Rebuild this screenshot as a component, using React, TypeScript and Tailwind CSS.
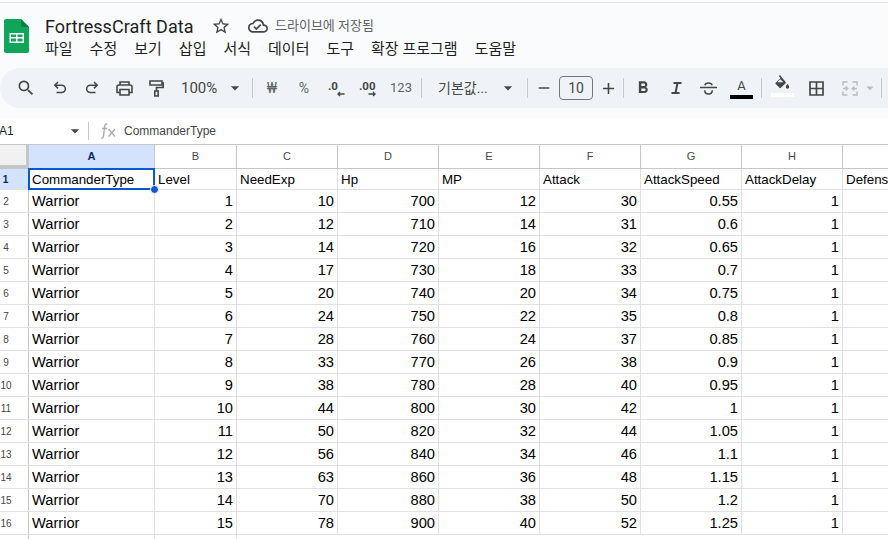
import { MdSearch, MdStarBorder, MdOutlineCloudDone, MdFormatBold, MdArrowDropDown, MdAdd, MdRemove } from "react-icons/md";

const needExp = [10, 12, 14, 17, 20, 24, 28, 33, 38, 44, 50, 56, 63, 70, 78];
const hp = [700, 710, 720, 730, 740, 750, 760, 770, 780, 800, 820, 840, 860, 880, 900];
const mp = [12, 14, 16, 18, 20, 22, 24, 26, 28, 30, 32, 34, 36, 38, 40];
const attack = [30, 31, 32, 33, 34, 35, 37, 38, 40, 42, 44, 46, 48, 50, 52];
const speed = ["0.55", "0.6", "0.65", "0.7", "0.75", "0.8", "0.85", "0.9", "0.95", "1", "1.05", "1.1", "1.15", "1.2", "1.25"];

const columns = [
  { name: "A", width: "w-[126px]", head: "CommanderType" },
  { name: "B", width: "w-[82px]", head: "Level" },
  { name: "C", width: "w-[101px]", head: "NeedExp" },
  { name: "D", width: "w-[101px]", head: "Hp" },
  { name: "E", width: "w-[101px]", head: "MP" },
  { name: "F", width: "w-[101px]", head: "Attack" },
  { name: "G", width: "w-[101px]", head: "AttackSpeed" },
  { name: "H", width: "w-[101px]", head: "AttackDelay" },
  { name: "", width: "w-[101px]", head: "Defense" },
];

const ui = "font-['Roboto',sans-serif]";
const kr = "font-['Roboto','Noto_Sans_CJK_KR',sans-serif]";
const sheet = "font-['Liberation_Sans',Arial,sans-serif]";

function SheetsLogo() {
  return (
    <svg width="25" height="34" viewBox="0 0 25 34">
      <path d="M2 0h15l8 8v24a2 2 0 0 1-2 2H2a2 2 0 0 1-2-2V2a2 2 0 0 1 2-2z" fill="#0fa65a" />
      <path d="M17 0l8 8h-6a2 2 0 0 1-2-2z" fill="#0b8043" />
      <path d="M5.5 14h14.5v10H5.5z M7 15.5v2.6h5v-2.6z M13.5 15.5v2.6h5v-2.6z M7 19.6v2.9h5v-2.9z M13.5 19.6v2.9h5v-2.9z" fill="#fff" fillRule="evenodd" />
    </svg>
  );
}

function Sep() {
  return <div className="w-px h-5 bg-[#c7c9cc] shrink-0" />;
}

function Btn({ w, children }: { w: string; children: React.ReactNode }) {
  return <div className={`${w} h-full flex items-center justify-center shrink-0 text-[#444746]`}>{children}</div>;
}

function Caret() {
  return <MdArrowDropDown size={20} className="text-[#444746]" />;
}

function UndoIcon({ flip = false }: { flip?: boolean }) {
  return (
    <svg width="14" height="14" viewBox="0 0 14 14" fill="none" stroke="#444746" strokeWidth="1.5" className={flip ? "-scale-x-100" : ""}>
      <path d="M5 1L1.8 4.2 5 7.4" />
      <path d="M2 4.2h6.7a3.6 3.6 0 0 1 0 7.3H3.5" />
    </svg>
  );
}

function PrintIcon() {
  return (
    <svg width="17" height="15" viewBox="0 0 17 15" fill="none" stroke="#444746" strokeWidth="1.6">
      <path d="M4 4V1h9v3" />
      <path d="M4 11.5H1V6a2 2 0 0 1 2-2h11a2 2 0 0 1 2 2v5.500h-3" />
      <path d="M4 8.500h9V14H4z" />
    </svg>
  );
}

function PaintIcon() {
  return (
    <svg width="15" height="17" viewBox="0 0 15 17" fill="none" stroke="#444746" strokeWidth="1.6">
      <path d="M1 1h12v4H1z" />
      <path d="M13 3h1.200v4.500H7.500V11" />
      <path d="M5.800 11h3.400v5H5.800z" />
    </svg>
  );
}

function DecreaseIcon() {
  return (
    <svg width="20" height="20" viewBox="0 0 20 20">
      <text x="1" y="12" fontSize="11.5" fontWeight="700" fill="#444746" fontFamily="Roboto, sans-serif">.0</text>
      <path d="M17.500 16H11M13 14l-2 2 2 2" fill="none" stroke="#444746" strokeWidth="1.400" />
    </svg>
  );
}

function IncreaseIcon() {
  return (
    <svg width="22" height="20" viewBox="0 0 22 20">
      <text x="1" y="12" fontSize="11.5" fontWeight="700" fill="#444746" fontFamily="Roboto, sans-serif">.00</text>
      <path d="M10.500 16H17M15 14l2 2-2 2" fill="none" stroke="#444746" strokeWidth="1.400" />
    </svg>
  );
}

function ItalicIcon() {
  return (
    <svg width="11" height="12" viewBox="0 0 11 12" fill="none" stroke="#444746" strokeWidth="2">
      <path d="M2.500 1H10.500M.5 11H8.500M6.500 1L4.500 11" />
    </svg>
  );
}

function StrikeIcon() {
  return (
    <svg width="17" height="13" viewBox="0 0 17 13" fill="none" stroke="#444746" strokeWidth="1.500">
      <path d="M0 5.500h17" />
      <path d="M4.800 3.200C5.200 1.800 6.800 1 8.500 1s3.200.8 3.700 2.200" />
      <path d="M4.800 8.200v.6c0 2 1.700 3.200 3.700 3.200s3.700-1.200 3.700-3.200v-.6" />
    </svg>
  );
}

function MergeIcon() {
  return (
    <svg width="16" height="15" viewBox="0 0 16 15" fill="none" stroke="#b9bcc0" strokeWidth="1.500">
      <path d="M1 4.500V1h4.500M1 10.500V14h4.500M15 4.500V1h-4.500M15 10.500V14h-4.500" />
      <path d="M1 7.500h4.500M3.700 5.500l2 2-2 2M15 7.500h-4.500M12.300 5.500l-2 2 2 2" />
    </svg>
  );
}

function BorderIcon() {
  return (
    <svg width="15" height="15" viewBox="0 0 15 15" fill="none" stroke="#444746" strokeWidth="1.700">
      <path d="M1 1h13v13H1zM7.500 1v13M1 7.500h13" />
    </svg>
  );
}

function FillIcon() {
  return (
    <div className="flex flex-col items-center mt-[-4px]">
      <svg width="15" height="15" viewBox="0 0 15 15" fill="#444746">
        <path d="M5 0L3.800 1.200 5.600 3 .7 7.700a1 1 0 0 0 0 1.400l3.800 3.700a1 1 0 0 0 1.400 0l4.700-4.500a1 1 0 0 0 0-1.400zM5.200 4.300l3.200 3H2.200z" />
        <path d="M12.500 9s-1.700 1.900-1.700 3a1.700 1.700 0 0 0 3.400 0c0-1.100-1.700-3-1.700-3z" />
      </svg>
      <div className="w-[23px] h-1 bg-white mt-[3px]" />
    </div>
  );
}

function FxIcon() {
  return (
    <svg width="15" height="16" viewBox="0 0 15 16" fill="none" stroke="#a9acaf" strokeWidth="1.400">
      <path d="M6.500 1.200C5 .6 4 1.200 3.700 3L2.500 12.800C2.200 14.600 1.500 15.300.2 14.800M1.200 5.500h5" />
      <path d="M7.500 6l6.500 7.500M14 6l-6.500 7.500" />
    </svg>
  );
}

function HeaderBar() {
  return (
    <div className="flex h-[66px] border-t border-[#e3e3e3] mt-[2px] bg-[#f9fbfd]">
      <div className="ml-[4px] mt-[16px] shrink-0">
        <SheetsLogo />
      </div>
      <div className="ml-[16px] mt-[11px]">
        <div className="flex items-center h-6">
          <span className={`${ui} text-[18px] tracking-[0.05px] text-[#1f1f1f] w-[167px]`}>FortressCraft Data</span>
          <MdStarBorder size={20} className="text-[#444746] ml-[-1px]" />
          <MdOutlineCloudDone size={20} className="text-[#444746] ml-[17px]" />
          <span className={`${kr} text-[13px] text-[#5f6368] ml-[7px]`}>드라이브에 저장됨</span>
        </div>
        <div className={`${kr} flex gap-[17px] text-[15px] text-[#1f1f1f] mt-px leading-5 whitespace-nowrap`}>
          {["파일", "수정", "보기", "삽입", "서식", "데이터", "도구", "확장 프로그램", "도움말"].map((m) => (
            <span key={m}>{m}</span>
          ))}
        </div>
      </div>
    </div>
  );
}

function Toolbar() {
  return (
    <div className="bg-[#f9fbfd] h-[50px] pb-[10px]">
      <div className="h-10 bg-[#eff3f8] rounded-l-[20px] flex items-center pl-[8px] overflow-hidden">
        <Btn w="w-[36px]"><MdSearch size={20} /></Btn>
        <Btn w="w-[32px]"><UndoIcon /></Btn>
        <Btn w="w-[32px]"><UndoIcon flip /></Btn>
        <Btn w="w-[32px]"><PrintIcon /></Btn>
        <Btn w="w-[32px]"><PaintIcon /></Btn>
        <div className={`${ui} w-[80px] h-full flex items-center pl-[9px] text-[15px] text-[#444746] shrink-0`}>
          <span className="w-[44px]">100%</span>
          <Caret />
        </div>
        <Sep />
        <Btn w="w-[38px]"><span className={`${ui} text-[14px] text-[#5f6368]`}>₩</span></Btn>
        <Btn w="w-[26px]"><span className={`${ui} text-[14px] text-[#5f6368]`}>%</span></Btn>
        <Btn w="w-[40px]"><DecreaseIcon /></Btn>
        <Btn w="w-[24px]"><IncreaseIcon /></Btn>
        <Btn w="w-[40px]"><span className={`${ui} text-[13px] text-[#5f6368]`}>123</span></Btn>
        <Sep />
        <div className={`${kr} w-[105px] h-full flex items-center pl-[16px] text-[14px] text-[#444746] shrink-0`}>
          <span className="w-[60px]">기본값...</span>
          <Caret />
        </div>
        <Sep />
        <Btn w="w-[31px]"><MdRemove size={18} /></Btn>
        <div className={`${ui} w-[34px] h-6 border border-[#747775] rounded-[4px] flex items-center justify-center text-[14px] text-[#444746] shrink-0`}>10</div>
        <Btn w="w-[30px]"><MdAdd size={19} /></Btn>
        <Sep />
        <Btn w="w-[38px]"><MdFormatBold size={20} /></Btn>
        <Btn w="w-[28px]"><ItalicIcon /></Btn>
        <Btn w="w-[36px]"><StrikeIcon /></Btn>
        <Btn w="w-[31px]">
          <div className="flex flex-col items-center">
            <span className={`${ui} text-[13px] leading-[15px]`}>A</span>
            <div className="w-[23px] h-1 bg-black mt-[2px]" />
          </div>
        </Btn>
        <div className="w-[4px] shrink-0" />
        <Sep />
        <Btn w="w-[41px]"><FillIcon /></Btn>
        <Btn w="w-[26px]"><BorderIcon /></Btn>
        <Btn w="w-[42px]"><MergeIcon /></Btn>
        <MdArrowDropDown size={18} className="text-[#b9bcc0] ml-[-10px] shrink-0" />
        <div className="w-[2px] shrink-0" />
        <Sep />
      </div>
    </div>
  );
}

function FormulaBar() {
  return (
    <div className="h-[26px] bg-white flex items-center">
      <span className={`${sheet} text-[12px] text-[#1f1f1f] w-[66px] ml-[-1px]`}>A1</span>
      <MdArrowDropDown size={20} className="text-[#444746] shrink-0" />
      <div className="w-px h-[18px] bg-[#c7c9cc] ml-[3px]" />
      <div className="ml-[12px]"><FxIcon /></div>
      <span className={`${sheet} text-[12px] text-[#444746] ml-[8px]`}>CommanderType</span>
    </div>
  );
}

function HeaderRow() {
  return (
    <div className="flex h-[25px] border-t border-[#c4c7c5] border-b-[#c4c7c5] border-b bg-white">
      <div className="w-[29px] shrink-0 h-full bg-[#f1f1f1] border-r-[3px] border-b-[3px] border-[#c4c7c5]" />
      {columns.map((c) => {
        const on = c.name === "A";
        return (
          <div key={c.head} className={`${c.width} shrink-0 flex items-center justify-center border-r border-[#c4c7c5] ${sheet} text-[11px] ${on ? "bg-[#d3e3fd] font-bold text-[#0b2b5b]" : "text-[#444746]"}`}>
            {c.name}
          </div>
        );
      })}
    </div>
  );
}

function FirstRow() {
  return (
    <div className="flex h-[21px] border-b border-[#e1e1e1] bg-white">
      <div className="w-[29px] shrink-0 bg-[#d3e3fd] border-r border-[#c4c7c5] flex items-center">
        <span className={`w-[11px] text-center ${sheet} text-[10px] font-bold text-[#0b2b5b]`}>1</span>
      </div>
      {columns.map((c, i) => (
        <div key={c.head} className={`${c.width} shrink-0 relative flex items-center pl-[3px] pt-[2px] border-r border-[#e1e1e1] ${sheet} text-[13.33px] text-black whitespace-nowrap`}>
          {c.head}
          {i === 0 && (
            <>
              <div className="absolute -left-px -top-px -right-px -bottom-px border-2 border-[#0b57d0]" />
              <div className="absolute -right-[5px] -bottom-[5px] w-[9px] h-[9px] rounded-full bg-[#0b57d0] border border-white z-10" />
            </>
          )}
        </div>
      ))}
    </div>
  );
}

function DataRow({ index }: { index: number }) {
  const values = [index + 1, needExp[index], hp[index], mp[index], attack[index], speed[index], 1];
  return (
    <div className={`flex h-[23px] border-b border-[#e1e1e1] bg-white ${sheet} text-[14.67px] text-black`}>
      <div className="w-[29px] shrink-0 border-r border-[#c4c7c5] flex items-center text-[10px] text-[#444746]">
        <span className="w-[12px] text-center">{index + 2}</span>
      </div>
      <div className="w-[126px] shrink-0 flex items-center pl-[3px] border-r border-[#e1e1e1]">Warrior</div>
      {values.map((v, i) => (
        <div key={i} className={`${columns[i + 1].width} shrink-0 flex items-center justify-end pr-[3px] border-r border-[#e1e1e1]`}>{v}</div>
      ))}
      <div className="w-[101px] shrink-0 border-r border-[#e1e1e1]" />
    </div>
  );
}

export default function App() {
  return (
    <div className="w-[888px] h-[539px] overflow-hidden bg-white">
      <HeaderBar />
      <Toolbar />
      <FormulaBar />
      <HeaderRow />
      <FirstRow />
      {needExp.map((_, i) => (
        <DataRow key={i} index={i} />
      ))}
      <div className="flex h-[10px] bg-white">
        <div className="w-[29px] border-r border-[#c4c7c5]" />
        <div className="w-[126px] border-r border-[#e1e1e1]" />
        <div className="w-[82px] border-r border-[#e1e1e1]" />
      </div>
    </div>
  );
}
